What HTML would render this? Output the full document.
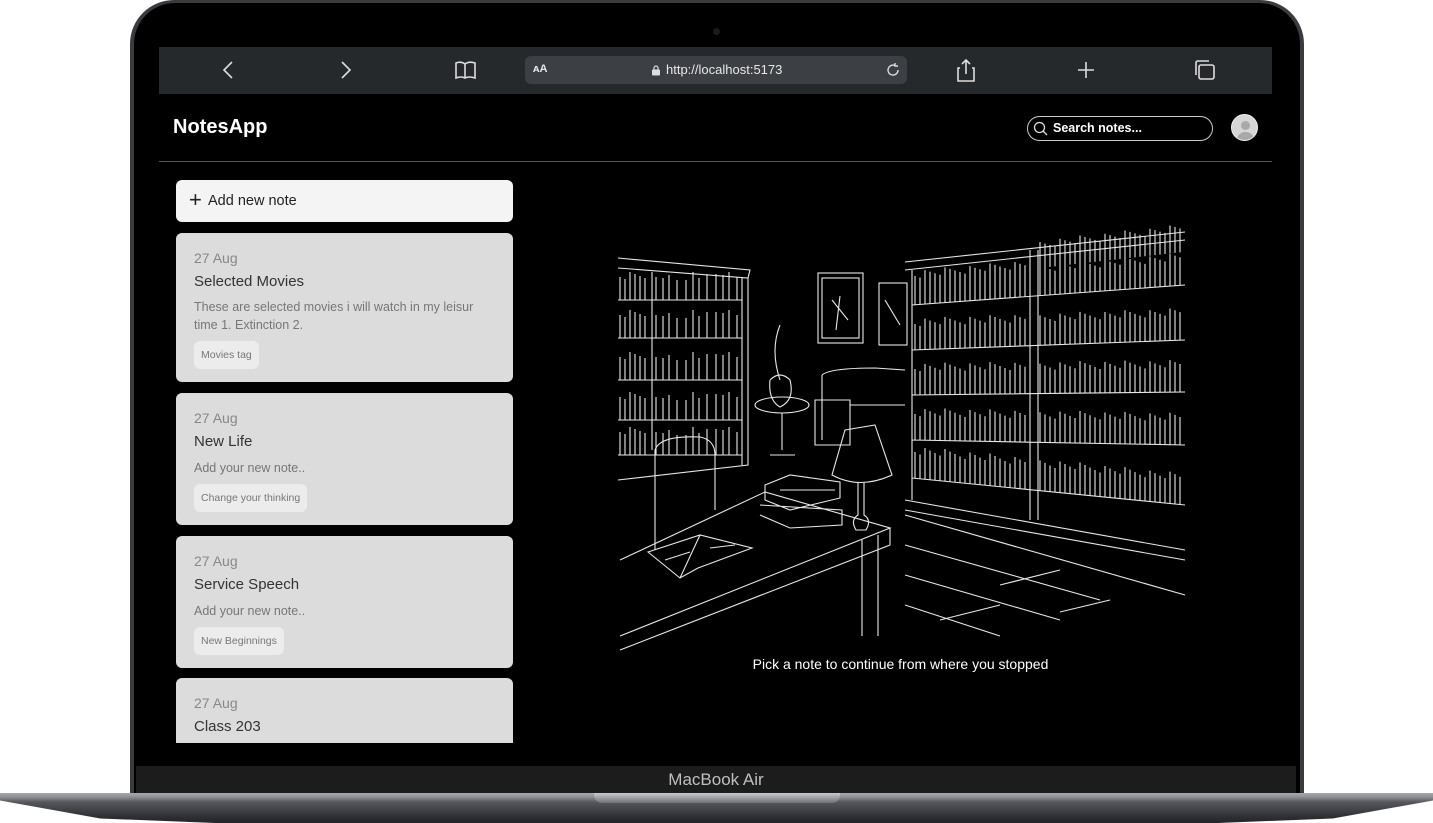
<!DOCTYPE html>
<html><head><meta charset="utf-8"><style>
*{margin:0;padding:0;box-sizing:border-box}
html,body{width:1433px;height:823px;background:#fff;overflow:hidden;font-family:"Liberation Sans",sans-serif}
.abs{position:absolute}
#lid{left:130px;top:0;width:1174px;height:795px;border-radius:44px 44px 0 0;background:#3a3b3f;}
#bezel{left:134px;top:3px;width:1166px;height:792px;border-radius:41px 41px 0 0;background:#000;}
#strip{left:136px;top:766px;width:1160px;height:28px;background:#1c1c1d;color:#bfbfbf;font-size:17px;text-align:center;line-height:28px}
#base{left:0;top:793px;width:1433px;height:30px;background:linear-gradient(#a7a9ae 0,#8e9095 4px,#55575c 9px,#2e2f33 24px,#23242a 30px);clip-path:polygon(0 0,100% 0,100% 25%,93% 85%,85% 100%,15% 100%,7% 85%,0 25%)}
#notch{left:594px;top:793px;width:246px;height:10px;background:linear-gradient(#c9cbcf,#6f7176);border-radius:0 0 8px 8px}
#tb{left:159px;top:47px;width:1113px;height:47px;background:#26292c}
#url{left:525px;top:56px;width:382px;height:28px;background:#3c3f43;border-radius:6px;color:#e8e8e8;font-size:13px}
#app{left:159px;top:94px;width:1113px;height:649px;background:#000;overflow:hidden}
.card{position:absolute;left:17px;width:337px;background:#dcdcdc;border-radius:6px;color:#444}
.d{position:absolute;left:18px;font-size:14px;color:#888}
.t{position:absolute;left:18px;font-size:15px;color:#333}
.p{position:absolute;left:18px;width:292px;font-size:12.5px;color:#777;line-height:18px}
.tag{position:absolute;left:18px;height:28px;padding:0 7px;background:#ececec;border-radius:6px;font-size:10.5px;color:#777;line-height:28px}
</style></head><body>
<div id="lid" class="abs"></div>
<div id="bezel" class="abs"></div>
<div class="abs" style="left:713px;top:28px;width:7px;height:7px;border-radius:50%;background:#1a1b1e"></div>
<div id="tb" class="abs"></div>
<svg class="abs" style="left:0;top:0" width="1433" height="100" fill="none" stroke="#ddd" stroke-width="1.6">
<path d="M232 62 L224 70 L232 78"/><path d="M342 62 L350 70 L342 78"/>
<path d="M456 63 Q461 61 465 64 Q469 61 475 63 V78 Q469 76 465 78 Q461 76 456 78Z M465 64V78"/>
<path d="M960 68 H958 V81 H974 V68 H972 M966 74 V60 M962 64 L966 60 L970 64"/>
<path d="M1078 70 H1094 M1086 62 V78"/>
<rect x="1199" y="65" width="15" height="14" rx="2"/><path d="M1196 75 V63 Q1196 61 1198 61 H1209"/>
</svg>
<div id="url" class="abs"><span style="position:absolute;left:8px;top:7px;font-size:11px;font-weight:bold">ᴀA</span>
<svg style="position:absolute;left:126px;top:9px" width="10" height="11" fill="#ddd"><rect x="1" y="4.5" width="8" height="6" rx="1"/><path d="M3 5 V3 A2 2 0 0 1 7 3 V5" fill="none" stroke="#ddd" stroke-width="1.2"/></svg>
<span style="position:absolute;left:141px;top:6px">http://localhost:5173</span>
<svg style="position:absolute;left:360px;top:6px" width="16" height="16" fill="none" stroke="#ddd" stroke-width="1.4"><path d="M13 8 A5 5 0 1 1 10 3.5 M10 1 V4 H13"/></svg></div>
<div id="app" class="abs">
<div style="position:absolute;left:14px;top:22px;color:#fff;font-size:20px;font-weight:bold">NotesApp</div>
<div style="position:absolute;left:868px;top:22px;width:186px;height:25px;border:1px solid #ccc;border-radius:13px;color:#fff;font-size:12.5px;font-weight:bold;line-height:23px;padding-left:25px">Search notes...
<svg style="position:absolute;left:5px;top:4px" width="16" height="16" fill="none" stroke="#ddd" stroke-width="1.3"><circle cx="6.5" cy="6.5" r="5"/><path d="M10 10 L14 14"/></svg></div>
<div style="position:absolute;left:1072px;top:20px;width:27px;height:27px;border-radius:50%;background:#d6d6d6;border:1px solid #eee;overflow:hidden">
<div style="position:absolute;left:9px;top:6px;width:9px;height:9px;border-radius:50%;background:#a9a9a9"></div>
<div style="position:absolute;left:5px;top:17px;width:17px;height:12px;border-radius:8px 8px 0 0;background:#a9a9a9"></div></div>
<div style="position:absolute;left:0;top:67px;width:1113px;height:1px;background:#555"></div>
<div class="card" style="top:86px;height:42px;background:#f4f4f4;font-size:14.5px;color:#222;line-height:42px;padding-left:32px">Add new note<span style="position:absolute;left:13px;top:-1px;font-size:22px;font-weight:300">+</span></div>
<div class="card" style="top:139px;height:149px"><div class="d" style="top:17px">27 Aug</div><div class="t" style="top:40px">Selected Movies</div><div class="p" style="top:65px">These are selected movies i will watch in my leisur time 1. Extinction 2.</div><div class="tag" style="top:108px">Movies tag</div></div>
<div class="card" style="top:299px;height:132px"><div class="d" style="top:17px">27 Aug</div><div class="t" style="top:40px">New Life</div><div class="p" style="top:66px">Add your new note..</div><div class="tag" style="top:91px">Change your thinking</div></div>
<div class="card" style="top:442px;height:132px"><div class="d" style="top:17px">27 Aug</div><div class="t" style="top:40px">Service Speech</div><div class="p" style="top:66px">Add your new note..</div><div class="tag" style="top:91px">New Beginnings</div></div>
<div class="card" style="top:584px;height:80px"><div class="d" style="top:17px">27 Aug</div><div class="t" style="top:40px">Class 203</div></div>
<div style="position:absolute;left:0;top:562px;width:1113px;text-align:center;padding-left:370px;color:#fff;font-size:14px">Pick a note to continue from where you stopped</div>
</div>
<svg id="ill" class="abs" style="left:0;top:0" width="1433" height="823" fill="none" stroke="#e8e8e8" stroke-width="1.1">
<path d="M618 258 L750 270 L748 278 L618 268 M652 272 V450 M742 278 V465 M748 278 V465 L618 480 M618 300 H742 M618 338 H742 M618 380 H742 M618 420 H742 M618 455 H742"/>
<rect x="818" y="273" width="45" height="70"/><rect x="822" y="278" width="37" height="60"/>
<rect x="879" y="283" width="28" height="62"/>
<path d="M832 300 L848 320 M840 296 L836 330 M885 300 L900 325"/>
<path d="M905 262 L1185 232 M905 270 L1185 240 M912 270 V500 M1030 250 V520 M1038 250 V520 M905 500 L1185 550 M905 510 L1185 560 M912 305 L1185 285 M912 350 L1185 340 M912 395 L1185 392 M912 440 L1185 445 M912 478 L1185 505"/>
<path d="M780 325 Q770 350 780 380 M770 380 Q780 370 790 380 Q795 400 780 407 Q768 400 770 380"/>
<ellipse cx="782" cy="405" rx="27" ry="8"/><path d="M782 413 V450 M770 455 H795"/>
<path d="M822 375 Q830 368 875 368 L905 370 M822 375 V440 M815 400 V445 H850 V400 Z M850 405 H905"/>
<path d="M655 550 V450 Q660 435 700 437 Q715 440 715 455 V510"/>
<path d="M620 560 L765 492 L890 528 L620 636 M890 528 V545 L620 650 M862 540 V636 M878 535 V636"/>
<path d="M765 485 L790 475 L840 482 L840 498 L790 510 L765 500 Z M760 505 L842 510 L842 525 L790 528 L760 515 M780 490 L835 490"/>
<path d="M845 430 L875 425 L892 475 Q860 490 832 475 Z M858 482 V515 Q850 520 856 530 H866 Q872 520 864 515 V482"/>
<path d="M648 552 L700 535 L752 548 L698 568 L680 578 Z M700 535 L680 578 M665 560 L690 552 M710 548 L735 545"/>
<path d="M905 515 L1185 595 M905 545 L1100 600 M905 575 L1060 620 M905 605 L1000 636 M940 620 L1000 605 M1000 585 L1060 570 M1060 612 L1110 600"/>
<g id="books"></g>
</svg>
<div id="strip" class="abs">MacBook Air</div>
<div id="base" class="abs"></div>
<div id="notch" class="abs"></div>
<script>
(function(){var g=document.getElementById('books'),s='';
function shelf(x0,x1,yb0,yb1,h){for(var x=x0;x<x1;x+=5+((x*7)%5)){var t=(x-x0)/(x1-x0),yb=yb0+(yb1-yb0)*t,hh=h-((x*13)%9);s+='M'+x+' '+yb+' V'+(yb-hh)+' ';}}
[300,338,380,420,455].forEach(function(y){shelf(620,650,y,y,28);shelf(656,740,y,y,28);});
var rs=[[305,285],[350,340],[395,392],[440,445],[478,505]];
rs.forEach(function(r,i){shelf(915,1028,r[0],r[0]+(r[1]-r[0])*0.42,32);shelf(1040,1183,r[0]+(r[1]-r[0])*0.46,r[1],32);});
shelf(915,1028,292,282,22);shelf(1040,1183,268,252,28);
g.innerHTML='<path d="'+s+'"/>';})();
</script>
</body></html>
